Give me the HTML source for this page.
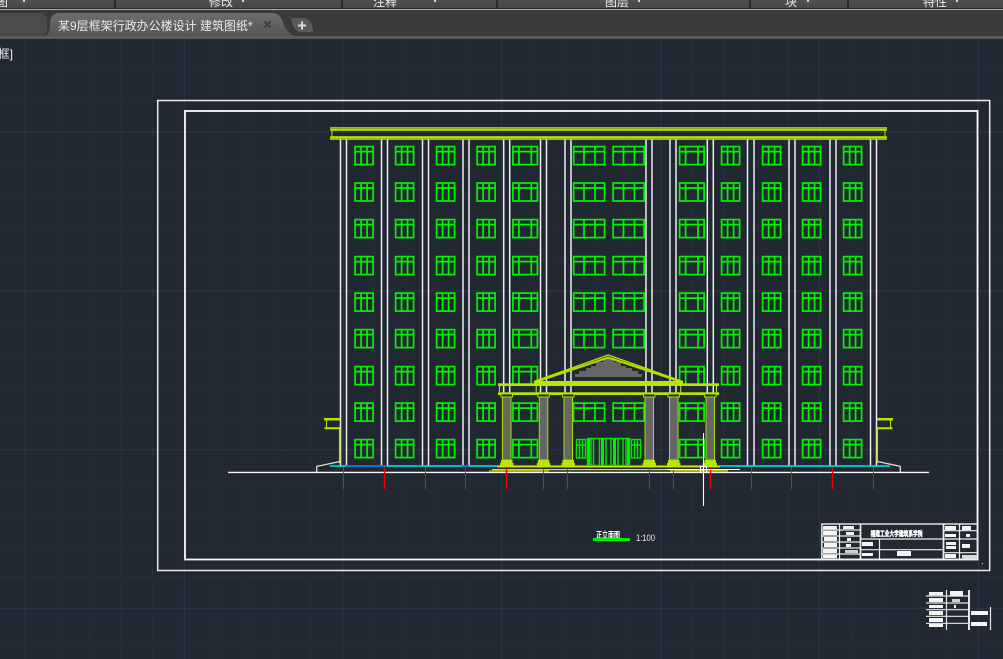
<!DOCTYPE html>
<html><head><meta charset="utf-8"><style>
html,body{margin:0;padding:0;background:#212831;width:1003px;height:659px;overflow:hidden}
svg{position:absolute;left:0;top:0;display:block}
text{font-family:"Liberation Sans","Noto Sans CJK SC",sans-serif}
</style></head><body>
<svg width="1003" height="659" viewBox="0 0 1003 659" xmlns="http://www.w3.org/2000/svg">
<defs>
<linearGradient id="act" x1="0" y1="0" x2="0" y2="1"><stop offset="0" stop-color="#6e6e6e"/><stop offset="1" stop-color="#555"/></linearGradient>
<linearGradient id="rib" x1="0" y1="0" x2="0" y2="1"><stop offset="0" stop-color="#505050"/><stop offset="1" stop-color="#474747"/></linearGradient>
<pattern id="minor" x="25" y="4.66" width="31.76" height="31.76" patternUnits="userSpaceOnUse"><path d="M0.5 0V31.76M0 0.5H31.76" stroke="#262d37" stroke-width="1" fill="none"/></pattern>
<pattern id="major" x="25" y="131.7" width="158.8" height="158.8" patternUnits="userSpaceOnUse"><path d="M0.5 0V158.8M0 0.5H158.8" stroke="#2e3542" stroke-width="1" fill="none"/></pattern>
<g id="wn" fill="none" stroke="#00f400" stroke-width="1.7"><rect x="0.6" y="0.6" width="18" height="18"/><path d="M0.6 5.6H18.6M6.6 0.6V18.6M12.6 0.6V18.6"/></g>
<g id="ww" fill="none" stroke="#00f400" stroke-width="1.7"><rect x="0.6" y="0.6" width="24.5" height="18"/><path d="M0.6 5.6H25M6.6 0.6V18.6M19 0.6V18.6"/></g>
<g id="wc" fill="none" stroke="#00f400" stroke-width="1.7"><rect x="0.6" y="0.6" width="31" height="18"/><path d="M0.6 5.6H31.6M11 0.6V18.6M22 0.6V18.6"/></g>
<g id="row"><use href="#wn" x="354.5"/><use href="#wn" x="395"/><use href="#wn" x="436"/><use href="#wn" x="476.5"/><use href="#ww" x="512.3"/><use href="#ww" x="679"/><use href="#wn" x="721"/><use href="#wn" x="762"/><use href="#wn" x="802"/><use href="#wn" x="843"/></g>
<g id="cen"><use href="#wc" x="573"/><use href="#wc" x="612.5"/></g>
<g id="col"><rect x="0" y="0" width="8.5" height="65" fill="#666" stroke="#a8e000" stroke-width="1"/><rect x="-1.5" y="-1" width="11.5" height="3" fill="#222a30" stroke="#a8e000" stroke-width="1"/><rect x="-1.5" y="65" width="11.5" height="6" fill="#b4e800"/><rect x="-2.5" y="68" width="13.5" height="3" fill="#b4e800"/></g>
</defs>

<!-- canvas -->
<rect x="0" y="39" width="1003" height="620" fill="#212831"/>
<rect x="0" y="39" width="1003" height="620" fill="url(#minor)"/>
<rect x="0" y="39" width="1003" height="620" fill="url(#major)"/>

<!-- ribbon -->
<rect x="0" y="0" width="1003" height="8" fill="url(#rib)"/>
<g fill="#2c2c2c"><rect x="114" y="0" width="2" height="8"/><rect x="341" y="0" width="2" height="8"/><rect x="496" y="0" width="2" height="8"/><rect x="749" y="0" width="2" height="8"/><rect x="847" y="0" width="2" height="8"/><rect x="0" y="8" width="1003" height="1"/></g>
<g fill="#e8edf2" font-size="12"><text x="-4" y="6">图</text><text x="209" y="6">修改</text><text x="373" y="6">注释</text><text x="605" y="6">图层</text><text x="785" y="6">块</text><text x="923" y="6">特性</text></g>
<g fill="#d8d8d8"><rect x="23" y="0" width="2" height="2"/><rect x="242" y="0" width="2" height="2"/><rect x="434" y="0" width="2" height="2"/><rect x="638" y="0" width="2" height="2"/><rect x="807" y="0" width="2" height="2"/><rect x="956" y="0" width="2" height="2"/></g>

<!-- tab bar -->
<rect x="0" y="9" width="1003" height="1" fill="#a9a9a9"/>
<rect x="0" y="10" width="1003" height="26" fill="#3a3a3a"/>
<path d="M0 13H40Q47 13 47 22V28Q47 36 38 36H0Z" fill="#4b4b4b"/>
<path d="M46 36Q50 34 50 24Q50 13 60 13H272Q280 13 283 22Q286 34 296 36Z" fill="url(#act)"/>
<path d="M291 18H304Q313 20 313 32H300Q294 32 291 18Z" fill="#5a5a5a"/>
<rect x="0" y="36" width="1003" height="3" fill="#5a5a5a"/>
<text x="58" y="30" font-size="12" fill="#e8edf2">某9层框架行政办公楼设计 建筑图纸*</text>
<path d="M264.5 21.5L270.5 27.5M270.5 21.5L264.5 27.5" stroke="#3e3e3e" stroke-width="2" fill="none"/>
<path d="M298 25.5H306M302 21.5V29.5" stroke="#d8d8d8" stroke-width="2" fill="none"/>

<text x="13" y="58" font-size="12" text-anchor="end" fill="#f0f0f0">框]</text>

<!-- drawing frames -->
<rect x="157.7" y="100.5" width="832" height="470" fill="none" stroke="#ececec" stroke-width="1.5"/>
<rect x="185" y="111" width="792.5" height="448.5" fill="none" stroke="#fafafa" stroke-width="1.8"/>

<!-- pilasters -->
<g stroke="#eeeef2" stroke-width="1.5" fill="none"><path d="M340.5 139V466M346.5 139V466M381.5 139V466M387.5 139V466M422.5 139V466M428.5 139V466M463 139V466M469 139V466M503.7 139V466M509.7 139V466M540.5 139V393M546.5 139V393M565 139V393M571 139V393M646 139V393M652 139V393M670 139V393M676 139V393M707.3 139V466M713.3 139V466M747.5 139V466M754 139V466M789 139V466M795 139V466M830 139V466M836 139V466M870.5 139V466M876.5 139V466"/></g>

<!-- cornice -->
<g fill="none" stroke="#b4e800"><rect x="330.7" y="127.7" width="555.6" height="2.6" stroke-width="1"/><rect x="330.7" y="136.7" width="555.6" height="2.6" stroke-width="1"/><path d="M331 129.5H886M331 137.6H886" stroke-width="2"/><path d="M332 130V137M885 130V137" stroke-width="1"/></g>

<!-- windows -->
<use href="#row" y="146"/><use href="#row" y="182.4"/><use href="#row" y="219"/><use href="#row" y="256"/><use href="#row" y="292.5"/><use href="#row" y="329"/><use href="#row" y="366"/><use href="#row" y="402.5"/><use href="#row" y="439"/>
<use href="#cen" y="146"/><use href="#cen" y="182.4"/><use href="#cen" y="219"/><use href="#cen" y="256"/><use href="#cen" y="292.5"/><use href="#cen" y="329"/><use href="#cen" y="402.5"/>

<!-- side wings -->
<g fill="none" stroke="#b4e800"><path d="M324 419.3H340M877 419.3H893" stroke-width="2.5"/><path d="M324.5 428.3H340M876.5 428.3H892.5" stroke-width="2"/><path d="M326.5 420V428M890.5 420V428" stroke-width="1"/><path d="M339.7 429V463M877.3 429V463" stroke-width="1.5"/></g>
<g fill="none" stroke="#dcdcdc" stroke-width="1.3"><path d="M316.7 472V466.4L340 461.5M900.3 472V466.4L877.5 461.5"/></g>

<!-- base line -->
<path d="M330 466H890" stroke="#00e8f0" stroke-width="1.4"/>
<path d="M346 466H387M462 466H469M504 466H510" stroke="#0a6ce0" stroke-width="1.6"/>

<!-- portico -->
<path d="M575 377L575 374H579V371H586V368H591V366H596V362H603V358H614V362H621V366H626V368H632V371H638V374H642V377Z" fill="#666"/>
<g fill="none" stroke="#b0e400"><path d="M534 381.5L608.3 355L682.7 381.5" stroke-width="1.4"/><path d="M537 381.5L608.3 357.5L680 381.5" stroke-width="2"/></g>
<rect x="534" y="381" width="149" height="4" fill="#b4e800"/>
<rect x="498" y="383.3" width="221" height="2.7" fill="#b4e800"/>
<rect x="498" y="392.3" width="221" height="2.7" fill="#b4e800"/>
<path d="M499.5 386V392M536.2 381V393M680.7 381V393M716.5 386V392" stroke="#b4e800" stroke-width="1.1" fill="none"/>
<use href="#col" x="502.5" y="395"/><use href="#col" x="539.3" y="395"/><use href="#col" x="564" y="395"/><use href="#col" x="645" y="395"/><use href="#col" x="669.5" y="395"/><use href="#col" x="706" y="395"/>

<!-- door -->
<g fill="none" stroke="#00e800" stroke-width="1.4"><rect x="587.5" y="438.5" width="42" height="27"/><path d="M591 439V465M593.5 439V465M599.5 439V465M602 439V465M606 439V465M611 439V465M615 439V465M618 439V465M623 439V465M626 439V465"/><rect x="576.5" y="439.5" width="9" height="18.5"/><path d="M579.5 440V458M582.5 440V458M576.5 445H586"/><rect x="631.5" y="439.5" width="9" height="18.5"/><path d="M634.5 440V458M637.5 440V458M631.5 445H641"/></g>
<g fill="#00f000"><rect x="587" y="439" width="3" height="27"/><rect x="601" y="439" width="3" height="27"/><rect x="613" y="439" width="3" height="27"/><rect x="627" y="439" width="3" height="27"/></g>

<!-- steps -->
<rect x="497" y="466" width="223" height="1.5" fill="#c4e400"/>
<rect x="492" y="469" width="236" height="1.2" fill="#e8e000"/>
<rect x="489" y="470.4" width="60" height="1" fill="#e8e000"/>
<rect x="670" y="470.4" width="58" height="1" fill="#e8e000"/>

<!-- ground -->
<path d="M228 472.4H929" stroke="#f6f6f6" stroke-width="1.4"/>

<!-- axis ticks -->
<g stroke="#d81818" stroke-width="1" fill="none"><path d="M343.5 467V489M425.5 467V489M465.5 467V489M543.5 467V489M567.5 467V489M649.5 467V489M673.5 467V489M751.5 467V489M791.5 467V489M873.5 467V489"/></g>
<g stroke="#f00000" stroke-width="1.4" fill="none"><path d="M384.5 467V489M506.5 467V489M710.5 467V489M832.5 467V489"/></g>

<!-- crosshair -->
<g stroke="#ffffff" fill="none"><path d="M703.5 433V506" stroke-width="1.1"/><path d="M667 469.5H740" stroke-width="1.1"/><rect x="700.5" y="466.5" width="6" height="6" stroke-width="1"/></g>

<!-- drawing title -->
<text x="596" y="538" font-size="8.5" font-weight="bold" textLength="24" lengthAdjust="spacingAndGlyphs" fill="#fff">正立面图</text>
<rect x="593" y="538" width="37" height="3" fill="#00f000"/>
<text x="636" y="541" font-size="9" textLength="19" lengthAdjust="spacingAndGlyphs" fill="#f0f0f0">1:100</text>

<!-- title block -->
<g fill="none" stroke="#eee" stroke-width="1.2">
<rect x="821.8" y="524" width="156" height="35.5" stroke-width="1.4"/>
<path d="M839.5 524V559.5M943.5 524V559.5M959.5 524V559.5"/>
<path d="M860.5 524V559.5M943.5 524V559.5" stroke-width="1.7"/>
<path d="M822 530H860M822 536H860M822 542H860M822 548H860M822 554H860"/>
<path d="M860 539H943M860 549.7H943M879.5 539V559.5"/>
<path d="M943 530.7H978M943 539H978M943 552.7H978"/>
</g>
<g fill="#f4f4f4">
<rect x="823" y="526" width="14" height="3.3"/><rect x="823" y="531" width="14" height="4"/><rect x="824" y="537" width="13" height="4"/><rect x="824" y="543" width="13" height="4"/><rect x="823" y="549" width="14" height="4"/><rect x="823" y="554.7" width="14" height="3.5"/>
<rect x="843" y="526" width="11" height="3"/><rect x="846" y="532" width="8" height="3"/><rect x="847" y="538" width="4" height="3"/><rect x="846" y="544" width="5" height="3"/><rect x="845" y="550" width="13" height="3" fill="#cfcfcf"/>
<rect x="862" y="542" width="11" height="4"/><rect x="862" y="553" width="11" height="3"/><rect x="897" y="551" width="14" height="5"/>
<rect x="945" y="526" width="11" height="4"/><rect x="945" y="534" width="11" height="3"/><rect x="962" y="526" width="9" height="4"/><rect x="966" y="534" width="4" height="3"/><rect x="946" y="542" width="10" height="3"/><rect x="946" y="546" width="10" height="3"/><rect x="962" y="544" width="8" height="4"/><rect x="945" y="554" width="11" height="4"/><rect x="962" y="555" width="15" height="4" fill="#d8d8d8"/>
<rect x="982" y="563" width="1" height="1"/>
</g>
<text x="870.5" y="536" font-size="7" font-weight="bold" textLength="52" lengthAdjust="spacingAndGlyphs" fill="#fff" stroke="#fff" stroke-width=".4">福建工业大学建筑系学院</text>

<!-- lower block -->
<g fill="none" stroke="#e6e6e6" stroke-width="1.2">
<path d="M946.5 590V630M990.5 607V630"/>
<path d="M969 590V630" stroke-width="2"/>
<path d="M926 596H969M926 603H969M926 609.7H969M926 616.3H969M926 623.3H969"/>
</g>
<g fill="#f4f4f4">
<rect x="929" y="592" width="14" height="3.3"/><rect x="929" y="598" width="14" height="4"/><rect x="929" y="605" width="14" height="3"/><rect x="929" y="611" width="14" height="4"/><rect x="929" y="618" width="14" height="4"/><rect x="929" y="624" width="14" height="3"/>
<rect x="950" y="591" width="13" height="5"/><rect x="952" y="599" width="8" height="3" fill="#cfcfcf"/><rect x="954" y="605" width="2" height="3"/>
<rect x="971" y="611" width="17" height="4"/><rect x="971" y="622" width="16" height="4"/>
</g>
</svg>
</body></html>
